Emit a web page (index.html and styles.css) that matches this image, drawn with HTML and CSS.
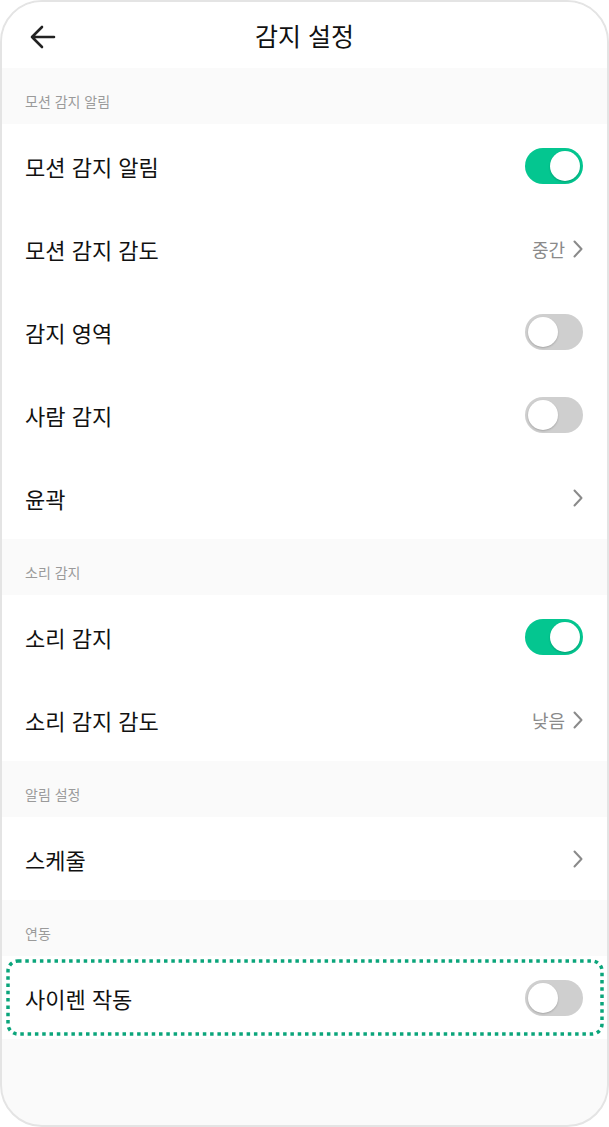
FILE: index.html
```html
<!DOCTYPE html>
<html lang="ko">
<head>
    <meta charset="UTF-8">
    <meta name="viewport" content="width=device-width, initial-scale=1.0">
    <title>감지 설정</title>
    <link rel="stylesheet" href="styles.css">
</head>
<body>
    <div class="phone">
        <header class="top-bar">
            <button class="back-btn" aria-label="뒤로">
                <svg width="28" height="28" viewBox="0 0 28 28">
                    <path d="M26 14H4M14 4L4 14L14 24" fill="none" stroke="#222" stroke-width="2.6" stroke-linecap="round" stroke-linejoin="round"/>
                </svg>
            </button>
            <h1>감지 설정</h1>
        </header>

        <div class="section-title">모션 감지 알림</div>
        <div class="group">
            <div class="row">
                <span class="label">모션 감지 알림</span>
                <span class="toggle on"><span class="knob"></span></span>
            </div>
            <div class="row">
                <span class="label">모션 감지 감도</span>
                <span class="value">중간
                    <svg class="chevron" width="10" height="18" viewBox="0 0 10 18"><path d="M1.5 1.5L8.5 9L1.5 16.5" fill="none" stroke="#8a8a8a" stroke-width="2" stroke-linecap="round" stroke-linejoin="round"/></svg>
                </span>
            </div>
            <div class="row">
                <span class="label">감지 영역</span>
                <span class="toggle"><span class="knob"></span></span>
            </div>
            <div class="row">
                <span class="label">사람 감지</span>
                <span class="toggle"><span class="knob"></span></span>
            </div>
            <div class="row">
                <span class="label">윤곽</span>
                <span class="value">
                    <svg class="chevron" width="10" height="18" viewBox="0 0 10 18"><path d="M1.5 1.5L8.5 9L1.5 16.5" fill="none" stroke="#8a8a8a" stroke-width="2" stroke-linecap="round" stroke-linejoin="round"/></svg>
                </span>
            </div>
        </div>

        <div class="section-title">소리 감지</div>
        <div class="group">
            <div class="row">
                <span class="label">소리 감지</span>
                <span class="toggle on"><span class="knob"></span></span>
            </div>
            <div class="row">
                <span class="label">소리 감지 감도</span>
                <span class="value">낮음
                    <svg class="chevron" width="10" height="18" viewBox="0 0 10 18"><path d="M1.5 1.5L8.5 9L1.5 16.5" fill="none" stroke="#8a8a8a" stroke-width="2" stroke-linecap="round" stroke-linejoin="round"/></svg>
                </span>
            </div>
        </div>

        <div class="section-title">알림 설정</div>
        <div class="group">
            <div class="row">
                <span class="label">스케줄</span>
                <span class="value">
                    <svg class="chevron" width="10" height="18" viewBox="0 0 10 18"><path d="M1.5 1.5L8.5 9L1.5 16.5" fill="none" stroke="#8a8a8a" stroke-width="2" stroke-linecap="round" stroke-linejoin="round"/></svg>
                </span>
            </div>
        </div>

        <div class="section-title">연동</div>
        <div class="group">
            <div class="row">
                <span class="label">사이렌 작동</span>
                <span class="toggle"><span class="knob"></span></span>
                <!-- highlight frame drawn over the row -->
                <svg class="highlight" width="598" height="77" viewBox="0 0 598 77">
                    <rect x="2" y="2" width="594" height="73" rx="10" fill="none" stroke="#0ba57b" stroke-width="3.5" stroke-dasharray="3.5 3.8"/>
                </svg>
            </div>
        </div>
    </div>
</body>
</html>
```

FILE: styles.css
```css
* {
    box-sizing: border-box;
}
body {
    margin: 0;
    background: #fff;
    font-family: 'Noto Sans CJK KR', 'Noto Sans', sans-serif;
}
.phone {
    width: 609px;
    height: 1127px;
    border: 2px solid #e4e4e4;
    border-radius: 42px;
    background: #fafafa;
    overflow: hidden;
}
.top-bar {
    height: 66px;
    background: #fff;
    display: flex;
    align-items: center;
    justify-content: center;
    position: relative;
}
.back-btn {
    position: absolute;
    left: 26px;
    top: 21px;
    padding: 0;
    border: none;
    background: none;
    display: flex;
}
.top-bar h1 {
    margin: 0;
    font-size: 25px;
    font-weight: 400;
    color: #111;
}
.section-title {
    height: 56px;
    padding: 24px 0 0 23px;
    font-size: 14px;
    line-height: 18px;
    color: #9a9a9a;
}
.group {
    background: #fff;
}
.row {
    height: 83px;
    padding: 0 24px 0 23px;
    display: flex;
    align-items: center;
    justify-content: space-between;
    position: relative;
}
.label {
    font-size: 22px;
    color: #111;
}
.value {
    display: flex;
    align-items: center;
    gap: 8px;
    font-size: 18px;
    color: #8a8a8a;
}
.chevron {
    display: block;
}
.toggle {
    width: 58px;
    height: 36px;
    border-radius: 18px;
    background: #cfcfcf;
    display: flex;
    align-items: center;
    padding: 0 3px;
}
.toggle .knob {
    width: 30px;
    height: 30px;
    border-radius: 50%;
    background: #fff;
    box-shadow: 0 1px 2px rgba(0, 0, 0, 0.2);
}
.toggle.on {
    background: #04c690;
    justify-content: flex-end;
}
.highlight {
    position: absolute;
    top: 3px;
    left: 4px;
}
```
